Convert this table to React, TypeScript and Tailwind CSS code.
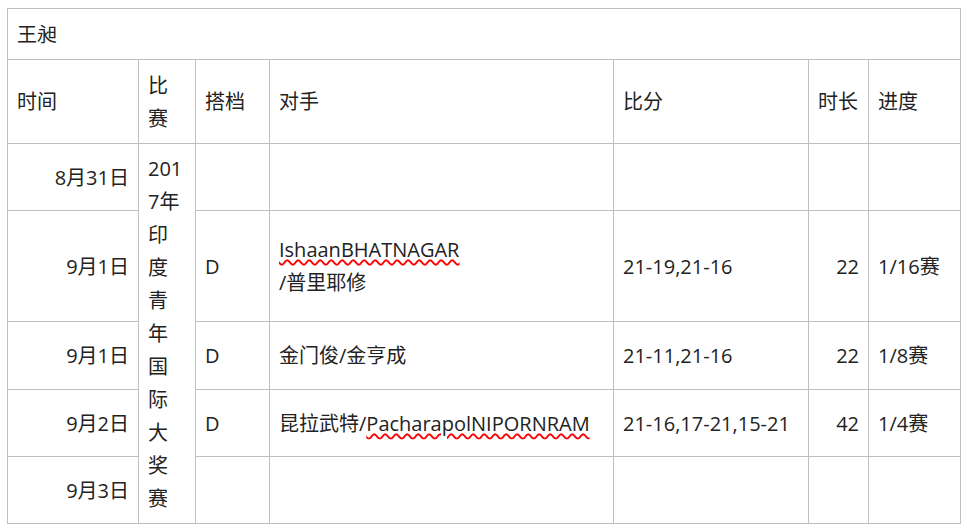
import React from "react";

const cell = "border border-[#c0c0c0] px-[9px] py-[8px] align-middle";

const Wavy = ({ children }: { children: React.ReactNode }) => (
  <span className="underline decoration-wavy decoration-[#f00] decoration-[1.5px] underline-offset-[2px]">{children}</span>
);

export default function App() {
  const eventLines = ["201", "7年", "印", "度", "青", "年", "国", "际", "大", "奖", "赛"];
  return (
    <div className="bg-white w-[965px] h-[527px] pl-[7px] pt-[8px]" style={{ fontFamily: '"Open Sans", "Noto Sans CJK SC", sans-serif' }}>
      <table className="border-collapse table-fixed w-[954px] text-[20px] leading-[33px] text-[#222]">
        <colgroup>
          <col className="w-[131px]" />
          <col className="w-[57px]" />
          <col className="w-[74px]" />
          <col className="w-[344px]" />
          <col className="w-[195px]" />
          <col className="w-[60px]" />
          <col className="w-[92px]" />
        </colgroup>
        <tbody>
          <tr className="h-[51px]">
            <td colSpan={7} className={cell}>王昶</td>
          </tr>
          <tr className="h-[84px]">
            <td className={cell}>时间</td>
            <td className={cell}>比<br />赛</td>
            <td className={cell}>搭档</td>
            <td className={cell}>对手</td>
            <td className={cell}>比分</td>
            <td className={cell}>时长</td>
            <td className={cell}>进度</td>
          </tr>
          <tr className="h-[67px]">
            <td className={`${cell} text-right`}>8月31日</td>
            <td rowSpan={5} className="border border-[#c0c0c0] px-[9px] pt-[8px] pb-0 align-top">
              {eventLines.map((l, i) => (
                <div key={i}>{l}</div>
              ))}
            </td>
            <td className={cell}></td>
            <td className={cell}></td>
            <td className={cell}></td>
            <td className={cell}></td>
            <td className={cell}></td>
          </tr>
          <tr className="h-[111px]">
            <td className={`${cell} text-right`}>9月1日</td>
            <td className={cell}>D</td>
            <td className={cell}>
              <Wavy>IshaanBHATNAGAR</Wavy>
              <br />/普里耶修
            </td>
            <td className={cell}>21-19,21-16</td>
            <td className={`${cell} text-right`}>22</td>
            <td className={cell}>1/16赛</td>
          </tr>
          <tr className="h-[68px]">
            <td className={`${cell} text-right`}>9月1日</td>
            <td className={cell}>D</td>
            <td className={cell}>金门俊/金亨成</td>
            <td className={cell}>21-11,21-16</td>
            <td className={`${cell} text-right`}>22</td>
            <td className={cell}>1/8赛</td>
          </tr>
          <tr className="h-[67px]">
            <td className={`${cell} text-right`}>9月2日</td>
            <td className={cell}>D</td>
            <td className={cell}>
              昆拉武特/<Wavy>PacharapolNIPORNRAM</Wavy>
            </td>
            <td className={cell}>21-16,17-21,15-21</td>
            <td className={`${cell} text-right`}>42</td>
            <td className={cell}>1/4赛</td>
          </tr>
          <tr className="h-[67px]">
            <td className={`${cell} text-right`}>9月3日</td>
            <td className={cell}></td>
            <td className={cell}></td>
            <td className={cell}></td>
            <td className={cell}></td>
            <td className={cell}></td>
          </tr>
        </tbody>
      </table>
    </div>
  );
}
